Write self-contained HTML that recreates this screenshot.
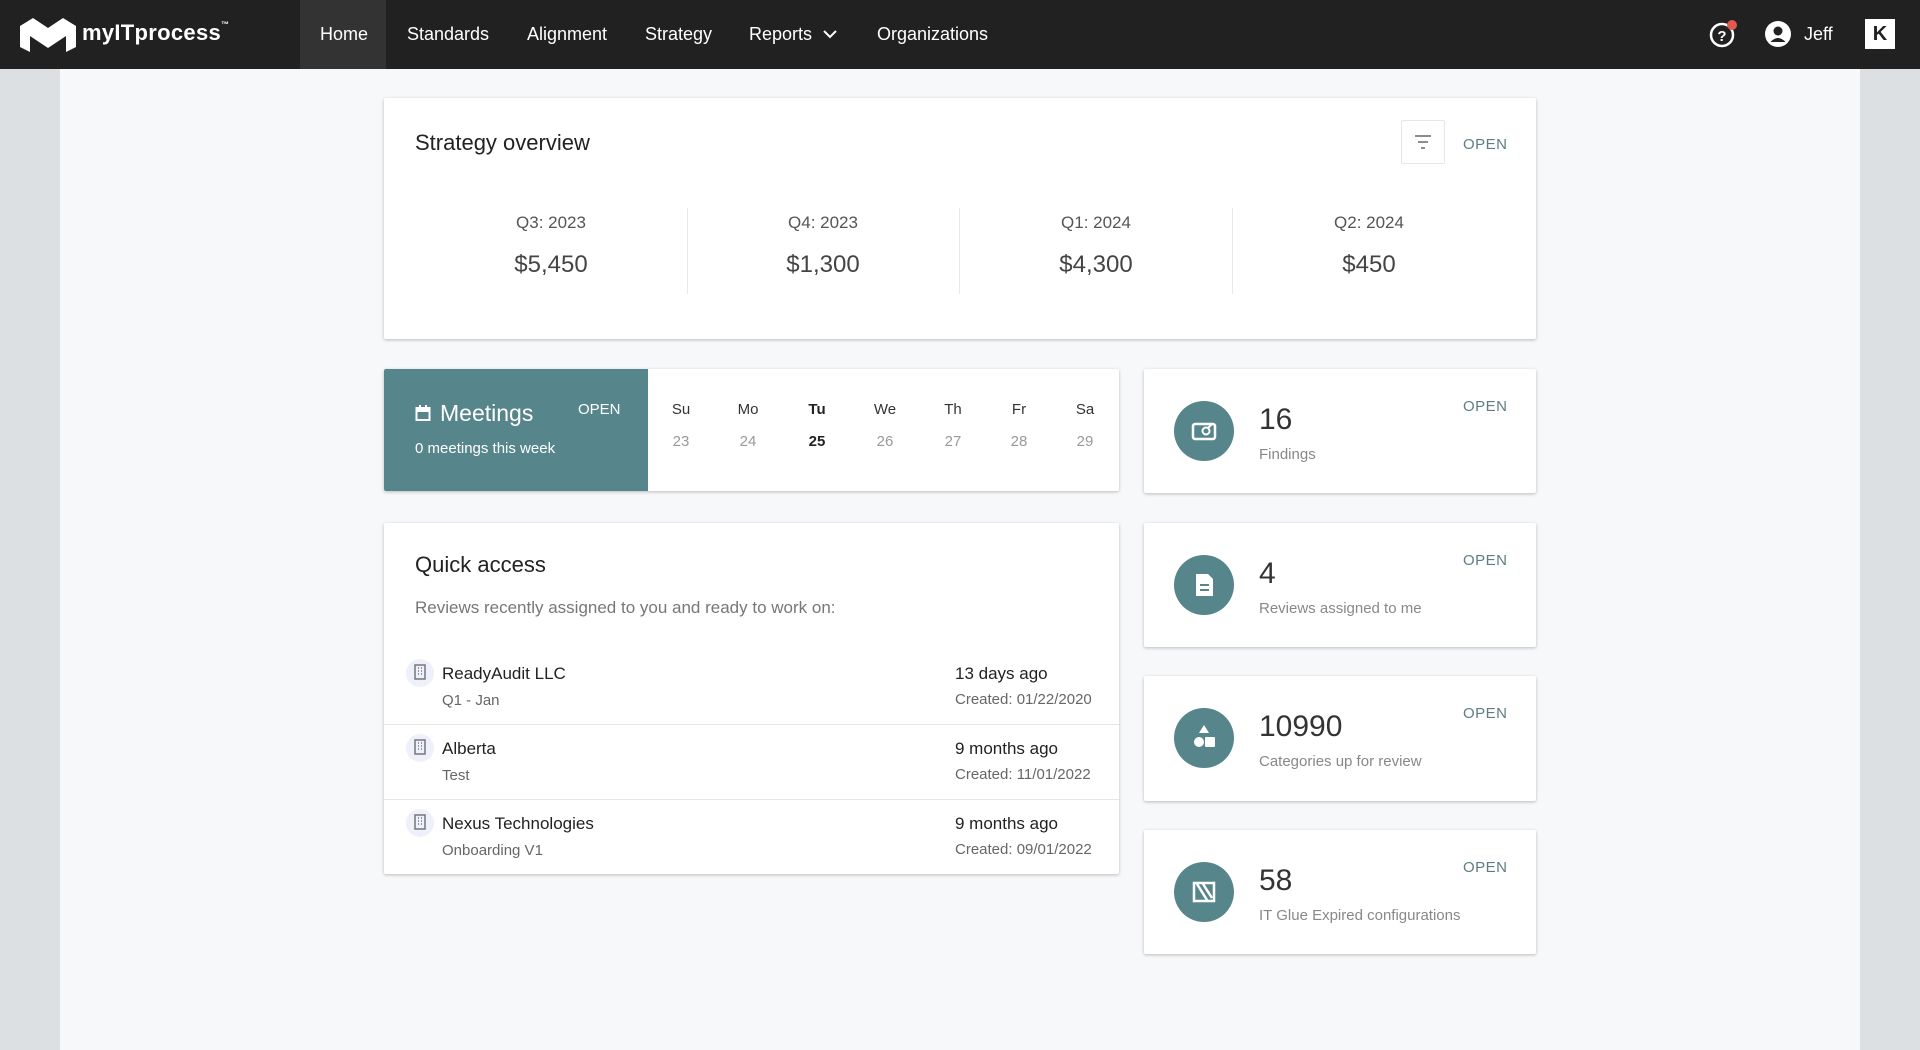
<!DOCTYPE html>
<html><head><meta charset="utf-8">
<style>
*{box-sizing:border-box;margin:0;padding:0}
body{width:1920px;height:1050px;overflow:hidden;background:#f7f8fa;font-family:"Liberation Sans",sans-serif;position:relative;color:#222}
.abs{position:absolute}
.nav{left:0;top:0;width:1920px;height:69px;background:#212121}
.side{top:69px;height:981px;background:#dde0e3}
.nv{position:absolute;top:0;height:69px;line-height:69px;color:#fff;font-size:18px}
.card{position:absolute;background:#fff;box-shadow:0 1px 3px rgba(0,0,0,.25);border-radius:2px}
.t{position:absolute;white-space:nowrap}
.open{font-size:15px;color:#5d7d82;letter-spacing:.5px}
.circ{position:absolute;width:60px;height:60px;border-radius:50%;background:#56868b;left:30px;top:32px}
.num{font-size:30px;color:#333;left:115px;top:34px}
.lab{font-size:15px;color:#888;left:115px;top:77px}
.ic{position:absolute;width:28px;height:28px;border-radius:50%;background:#eef0fb;left:22px}
</style></head><body>
<div class="abs nav"></div>
<div class="abs" style="left:300px;top:0;width:86px;height:69px;background:#333"></div>
<svg class="abs" style="left:20px;top:17px" width="58" height="36" viewBox="20 17 58 36"><polygon fill="#fff" points="20,26 33,18 48,28 63,18 76,26 76,47 66,52 66,36 48,48 30,36 30,52 20,47"/></svg>
<div class="t" style="left:82px;top:20px;color:#fff;font-size:22px;font-weight:bold;letter-spacing:.3px">myITprocess<span style="font-size:8px;vertical-align:top">™</span></div>
<div class="nv" style="left:320px">Home</div>
<div class="nv" style="left:407px">Standards</div>
<div class="nv" style="left:527px">Alignment</div>
<div class="nv" style="left:645px">Strategy</div>
<div class="nv" style="left:749px">Reports</div>
<svg class="abs" style="left:822px;top:29px" width="16" height="10"><path d="M2 2 L8 8 L14 2" stroke="#fff" stroke-width="2" fill="none"/></svg>
<div class="nv" style="left:877px">Organizations</div>
<svg class="abs" style="left:1708px;top:20px" width="30" height="30"><circle cx="14" cy="15" r="11" stroke="#fff" stroke-width="2.5" fill="none"/><text x="14" y="21" fill="#fff" font-size="15" font-weight="bold" text-anchor="middle" font-family="Liberation Sans">?</text><circle cx="24" cy="5" r="5" fill="#e05a50"/></svg>
<svg class="abs" style="left:1764px;top:20px" width="28" height="28"><circle cx="14" cy="14" r="13" fill="#fff"/><circle cx="14" cy="11" r="4.5" fill="#212121"/><path d="M6.5 22 Q14 14 21.5 22 Z" fill="#212121"/></svg>
<div class="nv" style="left:1804px">Jeff</div>
<div class="abs" style="left:1865px;top:19px;width:30px;height:30px;background:#fff;color:#222;font-weight:bold;font-size:20px;text-align:center;line-height:30px">K</div>
<div class="abs side" style="left:0;width:60px"></div>
<div class="abs side" style="left:1860px;width:60px"></div>

<div class="card" style="left:384px;top:98px;width:1152px;height:241px">
  <div class="t" style="left:31px;top:32px;font-size:22px;color:#222">Strategy overview</div>
  <div class="abs" style="left:1017px;top:22px;width:44px;height:44px;border:1px solid #e6e6e6;border-radius:2px"></div>
  <svg class="abs" style="left:1029px;top:35px" width="20" height="18"><path d="M2 3H18M5 9H15M8 15H12" stroke="#666" stroke-width="1.5"/></svg>
  <div class="t open" style="left:1079px;top:38px">OPEN</div>
  <div class="abs" style="left:303px;top:110px;width:1px;height:86px;background:#e8e8e8"></div>
  <div class="abs" style="left:575px;top:110px;width:1px;height:86px;background:#e8e8e8"></div>
  <div class="abs" style="left:848px;top:110px;width:1px;height:86px;background:#e8e8e8"></div>
  <div class="t" style="left:67px;width:200px;text-align:center;top:115px;font-size:17px;color:#555">Q3: 2023</div>
  <div class="t" style="left:339px;width:200px;text-align:center;top:115px;font-size:17px;color:#555">Q4: 2023</div>
  <div class="t" style="left:612px;width:200px;text-align:center;top:115px;font-size:17px;color:#555">Q1: 2024</div>
  <div class="t" style="left:885px;width:200px;text-align:center;top:115px;font-size:17px;color:#555">Q2: 2024</div>
  <div class="t" style="left:67px;width:200px;text-align:center;top:153px;font-size:24px;color:#444">$5,450</div>
  <div class="t" style="left:339px;width:200px;text-align:center;top:153px;font-size:24px;color:#444">$1,300</div>
  <div class="t" style="left:612px;width:200px;text-align:center;top:153px;font-size:24px;color:#444">$4,300</div>
  <div class="t" style="left:885px;width:200px;text-align:center;top:153px;font-size:24px;color:#444">$450</div>
</div>

<div class="card" style="left:384px;top:369px;width:735px;height:122px;overflow:hidden">
  <div class="abs" style="left:0;top:0;width:264px;height:122px;background:#56868b"></div>
  <svg class="abs" style="left:31px;top:35px" width="16" height="18"><rect x="1.5" y="4" width="13" height="12" fill="none" stroke="#fff" stroke-width="2"/><rect x="1.5" y="4" width="13" height="4" fill="#fff"/><path d="M5 1V5M11 1V5" stroke="#fff" stroke-width="2"/></svg>
  <div class="t" style="left:56px;top:31px;font-size:23px;color:#fff">Meetings</div>
  <div class="t" style="left:194px;top:32px;font-size:15px;color:#fff">OPEN</div>
  <div class="t" style="left:31px;top:71px;font-size:15px;color:#fff">0 meetings this week</div>
  <div class="t" style="left:282px;width:30px;text-align:center;top:32px;font-size:15px;color:#333">Su</div>
  <div class="t" style="left:349px;width:30px;text-align:center;top:32px;font-size:15px;color:#333">Mo</div>
  <div class="t" style="left:418px;width:30px;text-align:center;top:32px;font-size:15px;color:#222;font-weight:bold">Tu</div>
  <div class="t" style="left:486px;width:30px;text-align:center;top:32px;font-size:15px;color:#333">We</div>
  <div class="t" style="left:554px;width:30px;text-align:center;top:32px;font-size:15px;color:#333">Th</div>
  <div class="t" style="left:620px;width:30px;text-align:center;top:32px;font-size:15px;color:#333">Fr</div>
  <div class="t" style="left:686px;width:30px;text-align:center;top:32px;font-size:15px;color:#333">Sa</div>
  <div class="t" style="left:282px;width:30px;text-align:center;top:64px;font-size:15px;color:#999">23</div>
  <div class="t" style="left:349px;width:30px;text-align:center;top:64px;font-size:15px;color:#999">24</div>
  <div class="t" style="left:418px;width:30px;text-align:center;top:64px;font-size:15px;color:#222;font-weight:bold">25</div>
  <div class="t" style="left:486px;width:30px;text-align:center;top:64px;font-size:15px;color:#999">26</div>
  <div class="t" style="left:554px;width:30px;text-align:center;top:64px;font-size:15px;color:#999">27</div>
  <div class="t" style="left:620px;width:30px;text-align:center;top:64px;font-size:15px;color:#999">28</div>
  <div class="t" style="left:686px;width:30px;text-align:center;top:64px;font-size:15px;color:#999">29</div>
</div>

<div class="card" style="left:384px;top:523px;width:735px;height:351px">
  <div class="t" style="left:31px;top:29px;font-size:22px;color:#222">Quick access</div>
  <div class="t" style="left:31px;top:75px;font-size:17px;color:#777">Reviews recently assigned to you and ready to work on:</div>
  <div class="ic" style="top:136px"></div>
  <div class="t" style="left:58px;top:141px;font-size:17px;color:#222">ReadyAudit LLC</div>
  <div class="t" style="left:58px;top:169px;font-size:15px;color:#666">Q1 - Jan</div>
  <div class="t" style="left:571px;top:141px;font-size:17px;color:#222">13 days ago</div>
  <div class="t" style="left:571px;top:168px;font-size:15px;color:#666">Created: 01/22/2020</div>
  <div class="abs" style="left:0;top:201px;width:735px;height:1px;background:#e6e6e6"></div>
  <div class="ic" style="top:211px"></div>
  <div class="t" style="left:58px;top:216px;font-size:17px;color:#222">Alberta</div>
  <div class="t" style="left:58px;top:244px;font-size:15px;color:#666">Test</div>
  <div class="t" style="left:571px;top:216px;font-size:17px;color:#222">9 months ago</div>
  <div class="t" style="left:571px;top:243px;font-size:15px;color:#666">Created: 11/01/2022</div>
  <div class="abs" style="left:0;top:276px;width:735px;height:1px;background:#e6e6e6"></div>
  <div class="ic" style="top:286px"></div>
  <div class="t" style="left:58px;top:291px;font-size:17px;color:#222">Nexus Technologies</div>
  <div class="t" style="left:58px;top:319px;font-size:15px;color:#666">Onboarding V1</div>
  <div class="t" style="left:571px;top:291px;font-size:17px;color:#222">9 months ago</div>
  <div class="t" style="left:571px;top:318px;font-size:15px;color:#666">Created: 09/01/2022</div>
</div>
<svg class="abs" style="left:413px;top:664px" width="14" height="16"><rect x="2" y="1" width="10" height="14" fill="none" stroke="#777" stroke-width="1.5"/><path d="M5 4h1M8 4h1M5 7h1M8 7h1M5 10h1M8 10h1" stroke="#777" stroke-width="1.5"/></svg>
<svg class="abs" style="left:413px;top:739px" width="14" height="16"><rect x="2" y="1" width="10" height="14" fill="none" stroke="#777" stroke-width="1.5"/><path d="M5 4h1M8 4h1M5 7h1M8 7h1M5 10h1M8 10h1" stroke="#777" stroke-width="1.5"/></svg>
<svg class="abs" style="left:413px;top:814px" width="14" height="16"><rect x="2" y="1" width="10" height="14" fill="none" stroke="#777" stroke-width="1.5"/><path d="M5 4h1M8 4h1M5 7h1M8 7h1M5 10h1M8 10h1" stroke="#777" stroke-width="1.5"/></svg>

<div class="card" style="left:1144px;top:369px;width:392px;height:124px">
  <div class="circ"><svg width="60" height="60"><rect x="19" y="23" width="22" height="15" rx="2" fill="none" stroke="#fff" stroke-width="2.5"/><circle cx="32" cy="30" r="3.5" fill="none" stroke="#fff" stroke-width="2"/><path d="M34 27 L38 23" stroke="#fff" stroke-width="2"/></svg></div>
  <div class="t num">16</div><div class="t lab">Findings</div>
  <div class="t open" style="left:319px;top:29px">OPEN</div>
</div>
<div class="card" style="left:1144px;top:523px;width:392px;height:124px">
  <div class="circ"><svg width="60" height="60"><path d="M22 19H34L39 24V41H22Z" fill="#fff"/><path d="M26 30H35M26 35H35" stroke="#56868b" stroke-width="2"/></svg></div>
  <div class="t num">4</div><div class="t lab">Reviews assigned to me</div>
  <div class="t open" style="left:319px;top:29px">OPEN</div>
</div>
<div class="card" style="left:1144px;top:676px;width:392px;height:125px">
  <div class="circ"><svg width="60" height="60"><path d="M30 17L35 25H25Z" fill="#fff"/><circle cx="25" cy="34" r="5" fill="#fff"/><rect x="31" y="29" width="10" height="10" rx="1" fill="#fff"/></svg></div>
  <div class="t num">10990</div><div class="t lab">Categories up for review</div>
  <div class="t open" style="left:319px;top:29px">OPEN</div>
</div>
<div class="card" style="left:1144px;top:830px;width:392px;height:124px">
  <div class="circ"><svg width="60" height="60"><rect x="20" y="21" width="20" height="18" fill="none" stroke="#fff" stroke-width="2.5"/><path d="M23 22L33 38M29 22L38 36" stroke="#fff" stroke-width="2.5"/></svg></div>
  <div class="t num">58</div><div class="t lab">IT Glue Expired configurations</div>
  <div class="t open" style="left:319px;top:29px">OPEN</div>
</div>
</body></html>
